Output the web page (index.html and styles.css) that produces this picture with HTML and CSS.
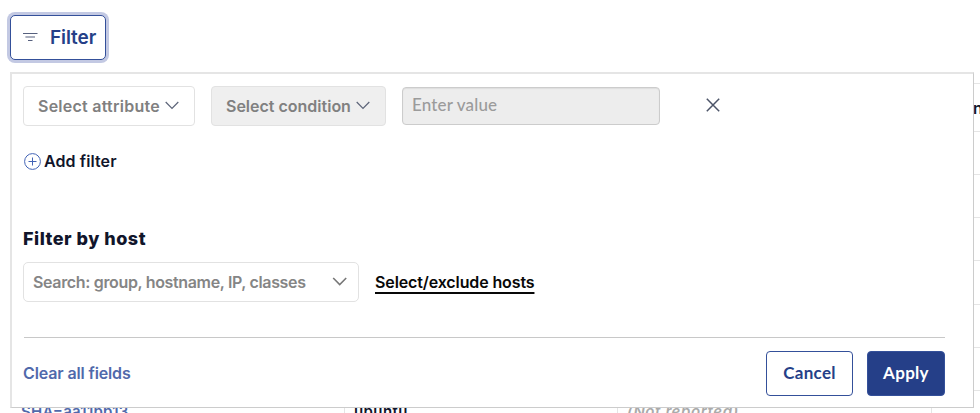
FILE: index.html
```html
<!DOCTYPE html>
<html lang="en">
<head>
<meta charset="utf-8">
<title>Filter hosts</title>
<link rel="stylesheet" href="styles.css">
</head>
<body>
<main class="page">
  <button class="filter-btn">
    <svg width="15" height="10" viewBox="0 0 15 10" stroke="#56607e" stroke-width="1.1"><path d="M0 1.5h14.5M2.4 5h9.6M5 8.5h4.5"/></svg>
    <span class="t-filter">Filter</span>
  </button>

  <div class="table">
    <div class="row head"><span></span><span></span><span></span><span class="edge">n</span></div>
    <div class="row"></div>
    <div class="row"></div>
    <div class="row"></div>
    <div class="row"></div>
    <div class="row"></div>
    <div class="row"></div>
    <div class="row data"><span class="sha">SHA=aa11bb13</span><span class="os">ubuntu</span><span class="none">(Not reported)</span><span></span></div>
  </div>

  <section class="panel">
    <div class="conditions">
      <button class="select attribute"><span class="t-attr">Select attribute</span>
        <svg width="14" height="9" viewBox="0 0 14 9" fill="none" stroke="#5c6478" stroke-width="1.2"><path d="M.7 1 7 7.5 13.3 1"/></svg></button>
      <button class="select condition" disabled><span class="t-cond">Select condition</span>
        <svg width="14" height="9" viewBox="0 0 14 9" fill="none" stroke="#5c6478" stroke-width="1.2"><path d="M.7 1 7 7.5 13.3 1"/></svg></button>
      <div class="value"><span class="t-value">Enter value</span></div>
      <svg class="remove" width="14" height="14" viewBox="0 0 14 14" stroke="#4c5468" stroke-width="1.5"><path d="m.8.8 12.4 12.4M13.2.8.8 13.2"/></svg>
    </div>
    <div class="add">
      <svg width="17" height="17" viewBox="0 0 17 17" fill="none" stroke="#4263b5" stroke-width="1"><circle cx="8.5" cy="8.5" r="7.9"/><path d="M8.5 4.5v8M4.5 8.5h8"/></svg>
      <span class="t-add">Add filter</span>
    </div>
    <h2><span class="t-host">Filter by host</span></h2>
    <div class="hosts">
      <div class="search"><span class="t-search">Search: group, hostname, IP, classes</span>
        <svg width="16" height="9" viewBox="0 0 16 9" fill="none" stroke="#777" stroke-width="1.6"><path d="m1.2 1 6.5 6.5L14.2 1"/></svg></div>
      <a class="t-exclude">Select/exclude hosts</a>
    </div>
    <footer>
      <a class="t-clear">Clear all fields</a>
      <div class="actions">
        <button class="btn cancel"><span class="t-cancel">Cancel</span></button>
        <button class="btn apply"><span class="t-apply">Apply</span></button>
      </div>
    </footer>
  </section>
</main>
</body>
</html>
```
FILE: styles.css
```css
* { box-sizing: border-box; }
body { margin: 0; background: #fff; color: #11152b; font: 600 16px/20px Inter, sans-serif; }
button { font: inherit; padding: 0; margin: 0; }
svg { display: block; flex: none; }
span, a { white-space: nowrap; }
.page { position: relative; width: 980px; height: 413px; overflow: hidden; padding: 15px 0 0 10px; }
.filter-btn { display: flex; align-items: center; gap: 12px; width: 96px; height: 45px; padding: 0 0 2px 12px; background: #fff; border: 1.5px solid #34509a; border-radius: 5px; box-shadow: 0 0 0 3px #c3c9e3; color: #253f88; }
.t-filter { font-size: 19px; letter-spacing: -.1px; padding-top: 2px; }

.table { width: 1100px; margin: 23px 0 0 1px; font-size: 15px; }
.row { display: grid; grid-template-columns: 334px 273px 314px 180px; height: 43.15px; border-top: 1px solid #e5e5e5; }
.row.head { height: 48px; }
.row span { border-right: 1px solid #e5e5e5; padding: 11px 9px; }
.row .edge { padding: 14px 0 0 41px; font-size: 16px; }
.row .sha { color: #5069ab; padding-left: 10px; letter-spacing: .25px; }
.row .os { letter-spacing: .4px; }
.row .none { color: #aaa; font-style: italic; letter-spacing: .6px; }

.panel { position: absolute; left: 10px; top: 72px; width: 964px; height: 336px; padding: 11px 28px 0 12px; background: #fff; border: solid; border-width: 2px 1px 1px 2px; border-color: #e5e5e5 #ccc #ccc #e5e5e5; }
.conditions { display: flex; align-items: center; height: 41px; }
.select { display: flex; align-items: center; gap: 5px; height: 40px; padding: 0 0 0 14px; background: #fff; border: 1px solid #e2e2e2; border-radius: 4px; color: #808080; }
.attribute { width: 172px; margin-left: -1px; }
.t-attr { letter-spacing: .25px; }
.condition { width: 175px; margin-left: 16px; background: #efefef; }
.value { display: flex; align-items: center; width: 258px; height: 38px; margin-left: 16px; padding: 0 10px 1px; background: #ededed; border: 1px solid #ccc; border-radius: 4px; box-shadow: inset 0 1px 1px #ddd; color: #9b9b9b; }
.remove { margin: -1px 0 0 46px; }
.add { display: flex; align-items: center; gap: 3px; height: 20px; margin-top: 25px; }
.t-add { letter-spacing: .1px; }
h2 { margin: 57px 0 0 -1px; font: 800 18px/22px Inter, sans-serif; letter-spacing: .5px; }
.hosts { display: flex; align-items: center; gap: 16px; margin: 12px 0 0 -1px; }
.search { display: flex; align-items: center; justify-content: space-between; width: 336px; height: 40px; padding: 0 10px 1px 9px; border: 1px solid #e2e2e2; border-radius: 5px; color: #858585; }
.t-search { letter-spacing: -.34px; }
.t-exclude { letter-spacing: -.12px; color: #080808; text-decoration: underline; text-decoration-thickness: 1.5px; text-underline-offset: 4px; }
footer { display: flex; align-items: center; justify-content: space-between; height: 72px; margin-top: 35px; border-top: 1px solid #c8c8c8; }
.t-clear { color: #5069ab; letter-spacing: -.13px; margin: -1px 0 0 -1px; }
.actions { display: flex; gap: 14px; }
.btn { height: 45px; padding-bottom: 2px; border: 1px solid #34509a; border-radius: 4px; font: 700 17px/20px Lato, sans-serif; letter-spacing: .3px; }
.cancel { width: 87px; background: #fff; color: #253f88; }
.apply { width: 78px; background: #253f88; color: #fff; }
.t-value { font: 500 17px/20px Lato, sans-serif; letter-spacing: .15px; margin-left: -1px; }
```
